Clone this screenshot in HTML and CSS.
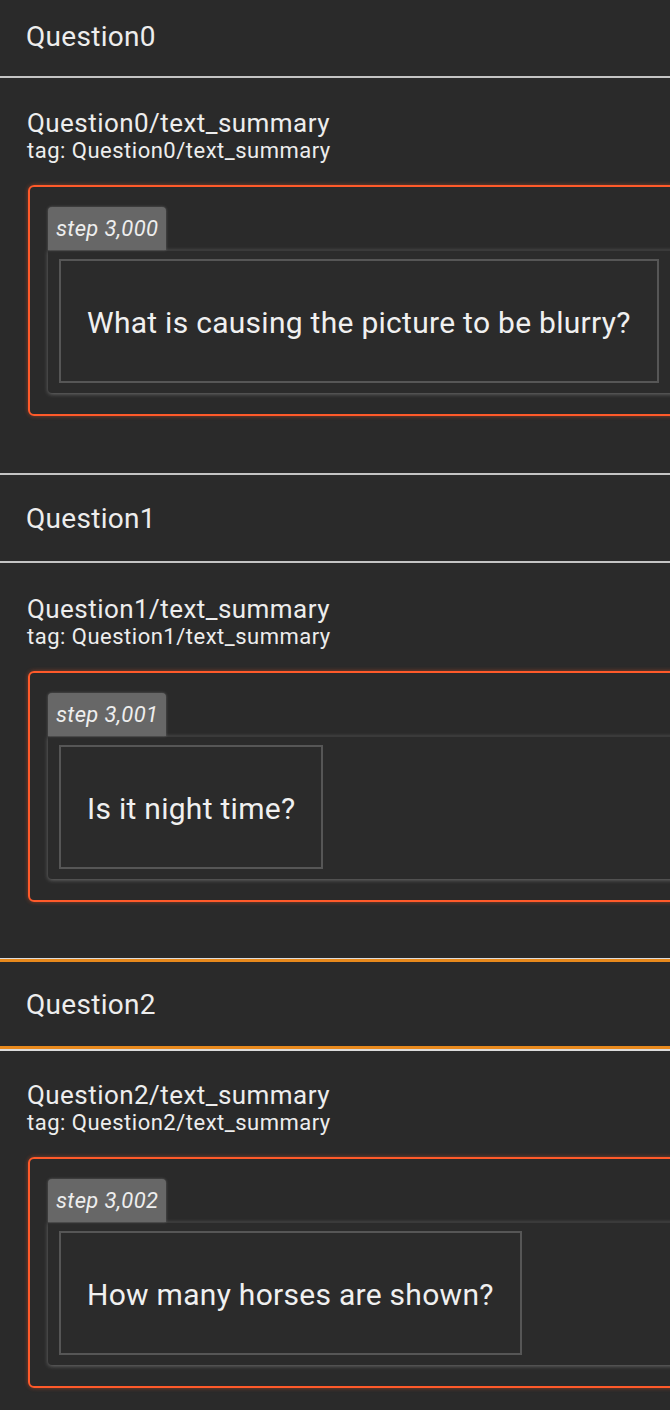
FILE: index.html
```html
<!DOCTYPE html>
<html>
<head>
<meta charset="utf-8">
<link rel="stylesheet" href="styles.css">
</head>
<body>
<div class="page">
  <section class="group first">
    <div class="group-header">Question0</div>
    <div class="group-body">
      <div class="run-title">Question0/text_summary</div>
      <div class="run-tag">tag: Question0/text_summary</div>
      <div class="card">
        <div class="chip">step 3,000</div>
        <div class="content">
          <div class="cell">What is causing the picture to be blurry?</div>
        </div>
      </div>
    </div>
  </section>
  <section class="group">
    <div class="group-header">Question1</div>
    <div class="group-body">
      <div class="run-title">Question1/text_summary</div>
      <div class="run-tag">tag: Question1/text_summary</div>
      <div class="card">
        <div class="chip">step 3,001</div>
        <div class="content">
          <div class="cell">Is it night time?</div>
        </div>
      </div>
    </div>
  </section>
  <section class="group focused">
    <div class="group-header">Question2</div>
    <div class="group-body">
      <div class="run-title">Question2/text_summary</div>
      <div class="run-tag">tag: Question2/text_summary</div>
      <div class="card">
        <div class="chip">step 3,002</div>
        <div class="content">
          <div class="cell">How many horses are shown?</div>
        </div>
      </div>
    </div>
  </section>
</div>
</body>
</html>
```

FILE: styles.css
```css
html, body {
  margin: 0;
  padding: 0;
  background: #2a2a2a;
  overflow: hidden;
}
body {
  width: 670px;
  height: 1410px;
  font-family: Roboto, "Liberation Sans", sans-serif;
  color: #ededed;
}
.page {
  width: 670px;
  overflow: hidden;
}
.group-header {
  border-top: 2px solid #c4c4c4;
  border-bottom: 2px solid #c4c4c4;
  height: 86px;
  display: flex;
  align-items: center;
  padding-left: 26px;
  font-size: 28px;
  letter-spacing: 0.3px;
}
.group.first .group-header {
  border-top: none;
  height: 72px;
  padding-bottom: 4px;
}
.group.focused .group-header {
  border-top: 1px solid #dcdcdc;
  border-bottom: 2px solid #dcdcdc;
  box-shadow: inset 0 3px 0 #e8891c, inset 0 -3px 0 #e8891c;
  height: 90px;
}
.group-body {
  padding: 32px 0 56px 28px;
}
.group.first .group-body {
  padding-top: 31px;
  padding-bottom: 57px;
}
.group.focused .group-body {
  padding-top: 30px;
}
.run-title {
  font-size: 26px;
  line-height: 28px;
  letter-spacing: 0.45px;
  margin-left: -1px;
}
.run-tag {
  margin-top: 2px;
  margin-left: -1px;
  font-size: 22px;
  line-height: 24px;
  letter-spacing: 0.5px;
}
.card {
  margin-top: 22px;
  width: 700px;
  border: 2px solid #ff5a2a;
  border-radius: 6px;
  box-shadow: 0 0 4px rgba(255, 90, 42, 0.45);
  padding: 20px 0 21px 18px;
}
.chip {
  display: inline-block;
  vertical-align: top;
  background: #676767;
  border-radius: 4px 4px 0 0;
  font-style: italic;
  font-size: 22px;
  letter-spacing: 0.35px;
  line-height: 43px;
  height: 43px;
  padding: 0 8px;
  color: #eeeeee;
  box-shadow: 0 0 3px rgba(200, 200, 200, 0.35);
}
.content {
  border-radius: 0 0 0 4px;
  background: #2b2b2b;
  box-shadow: 0 1px 4px rgba(190, 190, 190, 0.45);
  border-top: 1px solid #3a3a3a;
  padding: 8px 0 10px 11px;
}
.cell {
  display: inline-block;
  vertical-align: top;
  border: 2px solid #565656;
  padding: 4px 26px 0 26px;
  height: 116px;
  line-height: 116px;
  font-size: 30px;
  letter-spacing: 0.28px;
  color: #f0f0f0;
}
```
